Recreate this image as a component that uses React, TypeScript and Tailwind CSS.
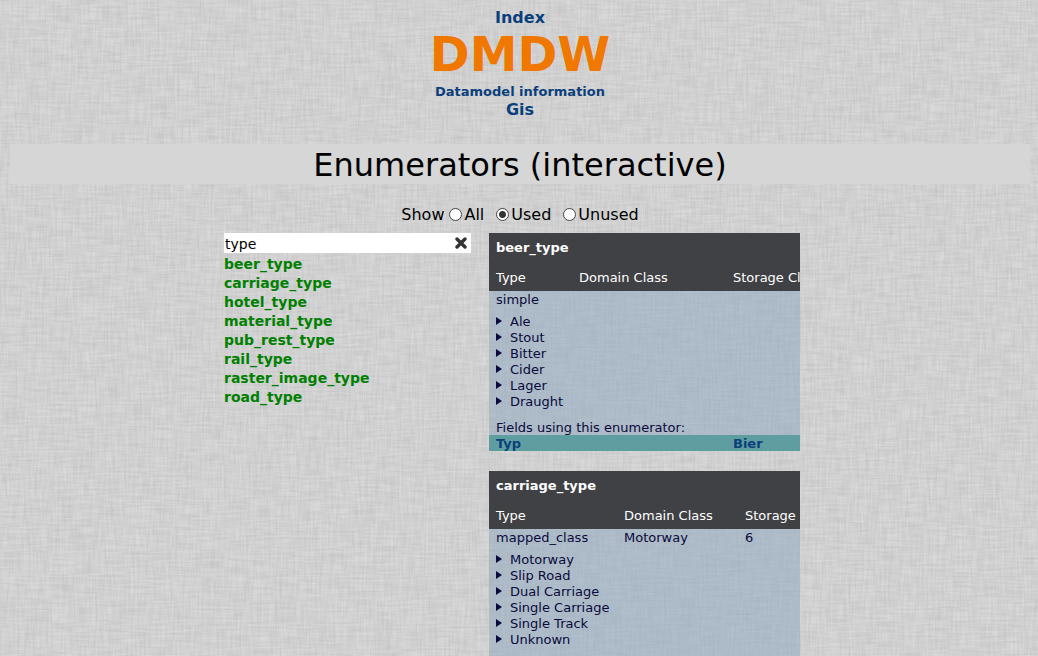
import { useState } from "react";

type Enumerator = {
  name: string;
  type: string;
  domainClass: string;
  storage: string;
  values: string[];
  columns: [string, string];
  fields: { field: string; owner: string }[];
};

const names = [
  "beer_type",
  "carriage_type",
  "hotel_type",
  "material_type",
  "pub_rest_type",
  "rail_type",
  "raster_image_type",
  "road_type",
];

const enumerators: Enumerator[] = [
  {
    name: "beer_type",
    type: "simple",
    domainClass: "",
    storage: "",
    values: ["Ale", "Stout", "Bitter", "Cider", "Lager", "Draught"],
    columns: ["w-[83px]", "w-[154px]"],
    fields: [{ field: "Typ", owner: "Bier" }],
  },
  {
    name: "carriage_type",
    type: "mapped_class",
    domainClass: "Motorway",
    storage: "6",
    values: ["Motorway", "Slip Road", "Dual Carriage", "Single Carriage", "Single Track", "Unknown"],
    columns: ["w-[128px]", "w-[121px]"],
    fields: [],
  },
];

function Linen() {
  return (
    <svg className="pointer-events-none absolute inset-0 -z-10 h-full w-full" aria-hidden="true">
      <filter id="weft" x="0" y="0" width="100%" height="100%" colorInterpolationFilters="sRGB">
        <feTurbulence type="fractalNoise" baseFrequency="0.04 0.45" numOctaves="2" seed="4" />
        <feColorMatrix values="0 0 0 0 0.5  0 0 0 0 0.5  0 0 0 0 0.5  0.7 0 0 0 -0.2" />
      </filter>
      <filter id="warp" x="0" y="0" width="100%" height="100%" colorInterpolationFilters="sRGB">
        <feTurbulence type="fractalNoise" baseFrequency="0.45 0.04" numOctaves="2" seed="9" />
        <feColorMatrix values="0 0 0 0 0.5  0 0 0 0 0.5  0 0 0 0 0.5  0.7 0 0 0 -0.2" />
      </filter>
      <rect width="100%" height="100%" fill="#dadada" />
      <rect width="100%" height="100%" filter="url(#weft)" opacity="0.36" />
      <rect width="100%" height="100%" filter="url(#warp)" opacity="0.36" />
    </svg>
  );
}

function EnumeratorCard({ item }: { item: Enumerator }) {
  return (
    <section className="overflow-hidden text-[13px] leading-4 text-[#0a0a3c]">
      <table className="w-[400px] table-fixed border-collapse bg-[#87a5be]/50 text-left">
        <colgroup>
          <col className={item.columns[0]} />
          <col className={item.columns[1]} />
          <col />
        </colgroup>
        <thead className="bg-[#404145] text-white">
          <tr>
            <th colSpan={3} className="h-[30px] pl-[7px] font-bold">{item.name}</th>
          </tr>
          <tr className="h-[28px]">
            <th className="pt-0.5 pl-[7px] font-normal">Type</th>
            <th className="pt-0.5 pl-[7px] font-normal">Domain Class</th>
            <th className="pt-0.5 pl-[7px] font-normal">Storage Class</th>
          </tr>
        </thead>
        <tbody>
          <tr className="h-[18px]">
            <td className="pl-[7px]">{item.type}</td>
            <td className="pl-[7px]">{item.domainClass}</td>
            <td className="pl-[7px]">{item.storage}</td>
          </tr>
          <tr>
            <td colSpan={3} className="pt-[5px] pb-2.5 pl-[7px]">
              {item.values.map((value) => (
                <details key={value} className="group">
                  <summary className="flex cursor-pointer list-none items-center gap-2">
                    <svg viewBox="0 0 6 8" className="mb-0.5 h-2 w-1.5 fill-current group-open:rotate-90" aria-hidden="true">
                      <path d="M0 0 6 4 0 8Z" />
                    </svg>
                    {value}
                  </summary>
                </details>
              ))}
            </td>
          </tr>
          {item.fields.length > 0 && (
            <tr>
              <td colSpan={3} className="pl-[7px] leading-[15px]">Fields using this enumerator:</td>
            </tr>
          )}
          {item.fields.map((f) => (
            <tr key={f.field} className="bg-[#5f9ea0] leading-[15px] font-bold text-[#0b3f7b]">
              <td colSpan={2} className="pt-px pl-[7px]"><a href="#field">{f.field}</a></td>
              <td className="pt-px pl-[7px]"><a href="#owner">{f.owner}</a></td>
            </tr>
          ))}
        </tbody>
      </table>
    </section>
  );
}

export default function App() {
  const [show, setShow] = useState("Used");
  const [query, setQuery] = useState("type");

  return (
    <div className="relative isolate h-screen overflow-y-auto pr-2 pl-2.5 font-['DejaVu_Sans',sans-serif] text-base text-black [scrollbar-width:none]">
      <Linen />
      <header className="flex flex-col items-center pt-2 font-bold text-[#0b3f7b]">
        <a href="#index" className="leading-5">Index</a>
        <a href="#home" className="pt-0.5 text-5xl leading-[48px] font-bold text-[#f07800]">DMDW</a>
        <a href="#info" className="pt-1.5 text-[13px] leading-4">Datamodel information</a>
        <a href="#gis" className="leading-5">Gis</a>
      </header>
      <h1 className="mt-6 bg-[#d6d6d6] pt-0.5 text-center text-[32px] leading-[38px]">Enumerators (interactive)</h1>

      <div role="radiogroup" aria-label="Show" className="mt-5 flex items-center justify-center leading-5">
        <span className="mr-[5px] pt-px leading-[19px]">Show</span>
        {["All", "Used", "Unused"].map((option) => (
          <label key={option} className="mr-3 flex items-center gap-0.5 pt-px leading-[19px] last:mr-0">
            <input
              type="radio"
              name="show"
              checked={show === option}
              onChange={() => setShow(option)}
              className="mb-px h-[13px] w-[13px] appearance-none rounded-full border border-[#444] bg-white checked:bg-[radial-gradient(circle,#333_0_3px,#fff_4px)]"
            />
            {option}
          </label>
        ))}
      </div>

      <main className="mx-auto mt-[9px] grid max-w-[592px] grid-cols-[247fr_311fr] items-start gap-[18px] pr-4">
        <nav>
          <div className="flex h-5 items-center bg-white pr-1">
            <input
              type="text"
              aria-label="Search enumerators"
              value={query}
              onChange={(e) => setQuery(e.target.value)}
              className="min-w-0 flex-1 bg-transparent pt-0.5 pl-px text-sm leading-[18px] outline-none"
            />
            <button type="button" aria-label="Clear" onClick={() => setQuery("")}>
              <svg viewBox="0 0 12 12" className="h-3 w-3" aria-hidden="true">
                <path d="M2 2 10 10M10 2 2 10" stroke="#333" strokeWidth="3.4" strokeLinecap="round" />
              </svg>
            </button>
          </div>
          <ul className="pt-0.5 text-sm leading-[19px] font-bold text-[#008000]">
            {names.map((name) => (
              <li key={name}><a href={"#" + name}>{name}</a></li>
            ))}
          </ul>
        </nav>
        <div className="flex min-w-0 flex-col gap-5">
          {enumerators.map((item) => (
            <EnumeratorCard key={item.name} item={item} />
          ))}
        </div>
      </main>
    </div>
  );
}
